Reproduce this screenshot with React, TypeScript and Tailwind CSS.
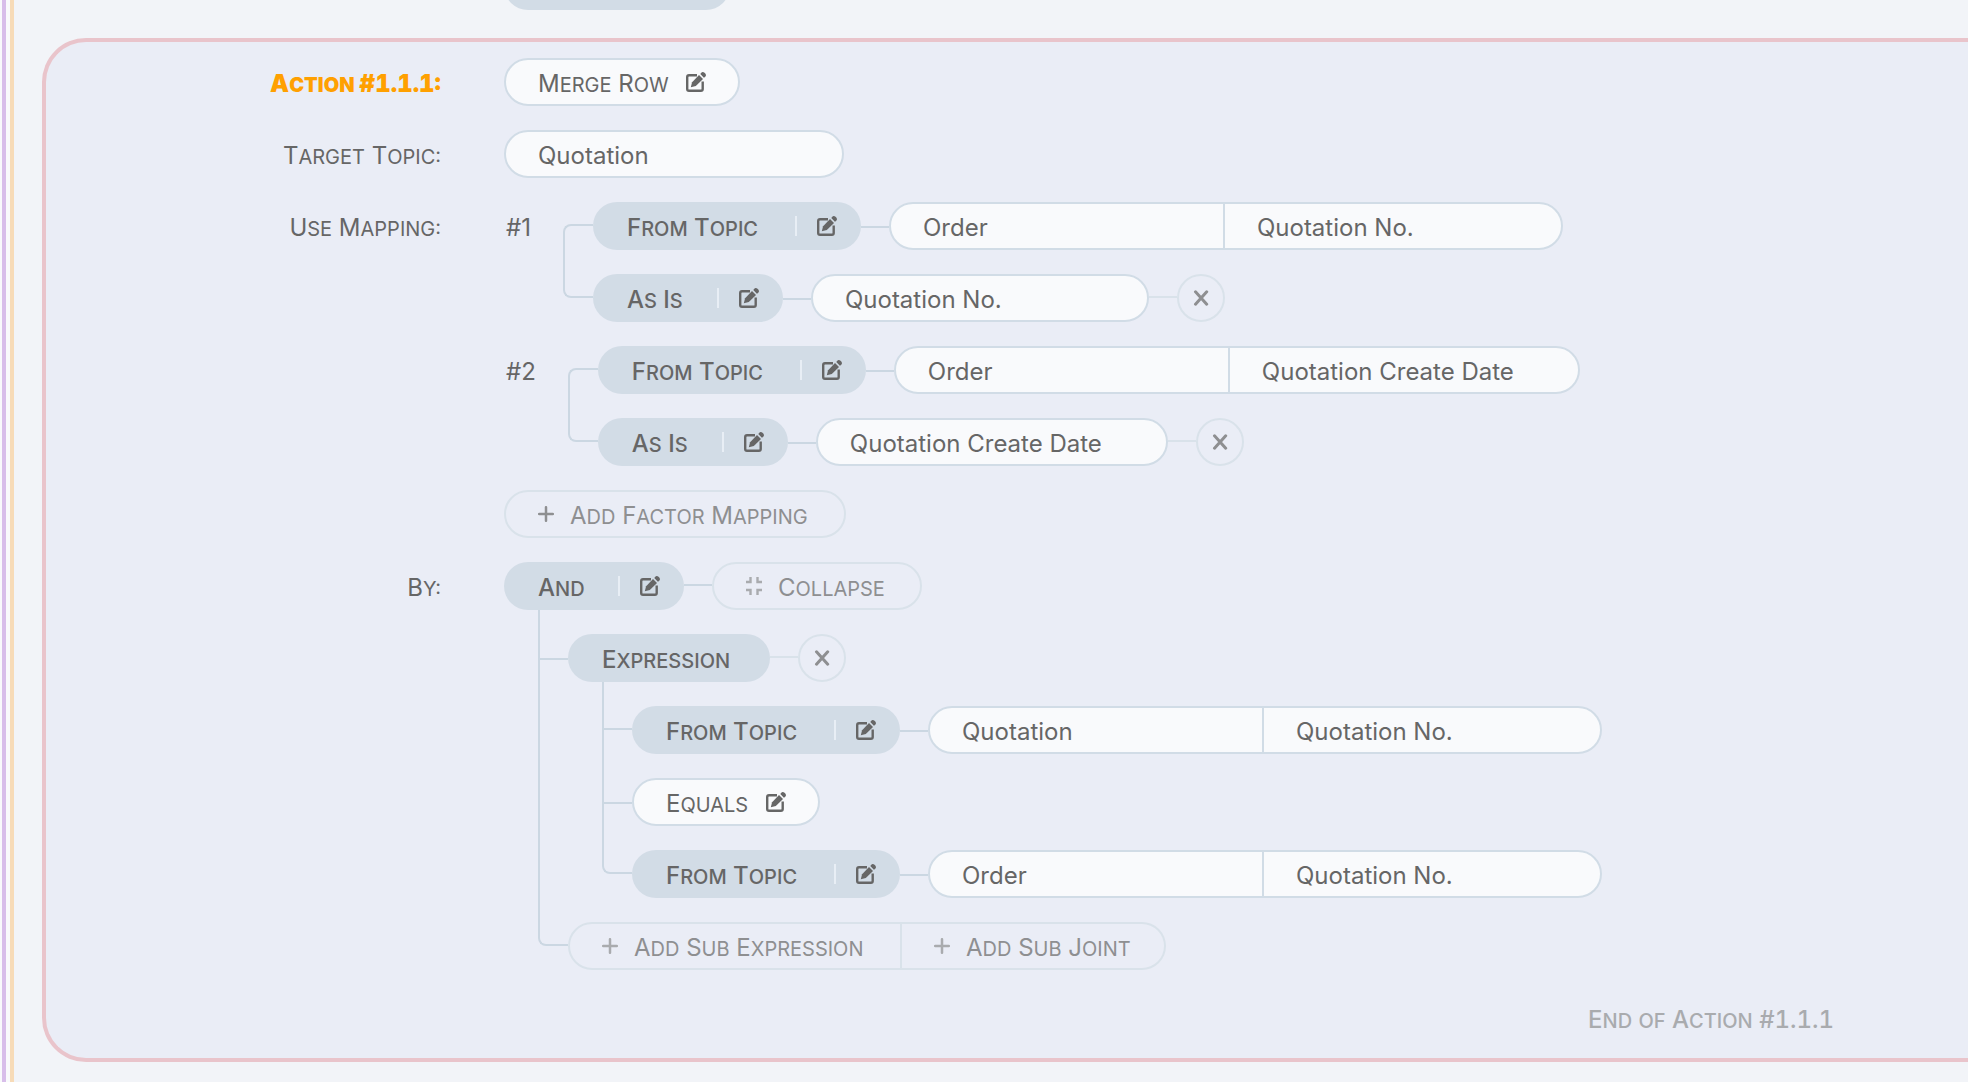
import React from "react";

/* Small-caps label: initials at full size, the rest as reduced capitals. */
function SmallCaps({ text }: { text: string }) {
  const words = text.split(" ");
  return (
    <span className="inline-block whitespace-nowrap pt-1 leading-6">
      {words.map((word, i) => (
        <React.Fragment key={i}>
          {i > 0 && " "}
          {word.startsWith("#") ? (
            <span className="inline-block tabular-nums">{word}</span>
          ) : word === "of" ? (
            <span className="inline-block text-[20px] uppercase leading-6">{word}</span>
          ) : (
            <span className="inline-block text-[20px] uppercase leading-6 first-letter:text-2xl">{word}</span>
          )}
        </React.Fragment>
      ))}
    </span>
  );
}

function EditIcon() {
  return (
    <svg className="h-5 w-5 shrink-0" viewBox="0 0 20 20" fill="none" aria-hidden="true">
      <path
        d="M11 3.3H3A1.8 1.8 0 0 0 1.2 5.1v11.9a1.8 1.8 0 0 0 1.8 1.8h11.9a1.8 1.8 0 0 0 1.8-1.8V9.6"
        stroke="currentColor"
        strokeWidth="2.4"
      />
      <path d="M13 3 17 7 9.8 14 4.8 15.3 6.1 10.3z" fill="currentColor" />
      <path d="M14.9 1.3a2.6 2.6 0 0 1 3.6-.6l.8.8a2.6 2.6 0 0 1-.6 3.7l-.8.6-3.6-3.7z" fill="currentColor" />
    </svg>
  );
}

function PlusIcon({ className = "" }: { className?: string }) {
  return (
    <svg className={`h-4 w-4 shrink-0 ${className}`} viewBox="0 0 16 16" fill="none" aria-hidden="true">
      <path d="M8 1.2v13.6M1.2 8h13.6" stroke="currentColor" strokeWidth="2.5" strokeLinecap="round" />
    </svg>
  );
}

function CrossIcon() {
  return (
    <svg className="h-4 w-4" viewBox="0 0 16 16" fill="none" aria-hidden="true">
      <path d="M2.5 1.8 13.7 14.2M13.7 1.8 2.5 14.2" stroke="currentColor" strokeWidth="3" strokeLinecap="round" />
    </svg>
  );
}

function CollapseIcon() {
  return (
    <svg className="h-[18px] w-4 shrink-0 text-[#a9abae]" viewBox="0 0 16 18" fill="none" aria-hidden="true">
      <path d="M4.5 0v5H0M11.5 0v5H16M4.5 18v-5H0M11.5 18v-5H16" stroke="currentColor" strokeWidth="2.4" />
    </svg>
  );
}

function Connector({ className = "mt-6 bg-[#cbd7e2]" }: { className?: string }) {
  return <span className={`h-0.5 w-7 shrink-0 ${className}`} />;
}

function Pill({ text, className = "", editable = true }: { text: string; className?: string; editable?: boolean }) {
  return (
    <button
      className={`flex h-12 shrink-0 items-center rounded-full bg-[#d2dce6] pl-[34px] font-medium ${
        editable ? "pr-6" : "pr-[34px]"
      } ${className}`}
    >
      <SmallCaps text={text} />
      {editable && (
        <>
          <span className="ml-auto mr-5 h-5 w-0.5 bg-[#e8eef5]" />
          <EditIcon />
        </>
      )}
    </button>
  );
}

function Choice({ text, className = "" }: { text: string; className?: string }) {
  return (
    <button
      className={`flex h-12 shrink-0 items-center justify-between rounded-full border-2 border-[#d1dce6] bg-[#f9fafc] px-8 ${className}`}
    >
      <SmallCaps text={text} />
      <EditIcon />
    </button>
  );
}

const field = "h-full bg-transparent pl-8 pt-0.5 outline-none";
const fieldBox = "flex h-12 shrink-0 overflow-hidden rounded-full border-2 border-[#d1dce6] bg-[#f9fafc]";

function TopicFactor({ topic, factor, wide = false }: { topic: string; factor: string; wide?: boolean }) {
  return (
    <div className="flex">
      <Pill text="From Topic" className="min-w-[268px]" />
      <Connector />
      <div className={fieldBox}>
        <input aria-label="Topic" className={`${field} w-[334px] border-r-2 border-[#d1dce6]`} defaultValue={topic} />
        <input aria-label="Factor" className={`${field} ${wide ? "w-[348px]" : "w-[336px]"}`} defaultValue={factor} />
      </div>
    </div>
  );
}

function RemoveButton() {
  return (
    <>
      <Connector className="mt-[22px] bg-[#d9e2ea]" />
      <button
        aria-label="Remove"
        className="flex h-12 w-12 shrink-0 items-center justify-center rounded-full border-2 border-[#d9e2ea] text-[#8e8f91]"
      >
        <CrossIcon />
      </button>
    </>
  );
}

function Mapping({ index, factor, wide = false }: { index: number; factor: string; wide?: boolean }) {
  return (
    <div className="flex">
      <span className="flex h-12 items-center pl-0.5 pt-1">#{index}</span>
      <span className="ml-8 mt-[22px] h-[74px] w-[30px] shrink-0 rounded-l-lg border-y-2 border-l-2 border-[#cbd7e2]" />
      <div className="flex flex-col gap-6">
        <TopicFactor topic="Order" factor={factor} wide={wide} />
        <div className="flex">
          <Pill text="As Is" className="min-w-[190px]" />
          <Connector />
          <div className={fieldBox}>
            <input
              aria-label="Target factor"
              className={`${field} ${wide ? "w-[348px]" : "w-[334px]"}`}
              defaultValue={factor}
            />
          </div>
          <RemoveButton />
        </div>
      </div>
    </div>
  );
}

function Branch({
  last = false,
  stub = "pt-12",
  children,
}: {
  last?: boolean;
  stub?: string;
  children: React.ReactNode;
}) {
  return (
    <div className="ml-[34px] flex">
      {last ? (
        <span className="h-12 w-[30px] shrink-0 rounded-bl-lg border-b-2 border-l-2 border-[#cbd7e2]" />
      ) : (
        <span className={`w-[30px] shrink-0 border-l-2 border-[#cbd7e2] ${stub}`}>
          <span className="block h-0.5 bg-[#cbd7e2]" />
        </span>
      )}
      <div className="pt-6">{children}</div>
    </div>
  );
}

const ghost = "flex h-12 shrink-0 items-center gap-4 border-2 border-[#d9e2ea] px-8 text-[#8e8f91]";

export default function App() {
  return (
    <div className="min-h-screen overflow-hidden bg-[#f9fafc] pl-0.5 text-2xl text-[#666] [font-family:Inter,sans-serif]">
      <div className="min-h-screen border-l-4 border-[#d8beea] pl-1">
        <div className="min-h-screen border-l-4 border-[#f7dbb8] bg-[#f2f4f8] pb-5">
          <div className="flow-root">
            <div className="-mt-[38px] ml-[490px] h-12 w-[226px] rounded-full bg-[#d2dce6]" />
          </div>

          <section className="ml-7 mt-7 rounded-l-[44px] border-4 border-r-0 border-[#e9c4cb] bg-[#eaedf6] py-4">
            <div className="grid grid-cols-[395px_1fr] gap-x-[63px] gap-y-6">
              <h2 className="flex h-12 items-center justify-end font-black text-[#ffa000]">
                <SmallCaps text="Action #1.1.1:" />
              </h2>
              <div className="flex">
                <Choice text="Merge Row" className="min-w-[236px]" />
              </div>

              <label htmlFor="target-topic" className="flex h-12 items-center justify-end">
                <SmallCaps text="Target Topic:" />
              </label>
              <div className="flex">
                <div className={fieldBox}>
                  <input id="target-topic" className={`${field} w-[336px]`} defaultValue="Quotation" />
                </div>
              </div>

              <div className="flex h-12 items-center justify-end">
                <SmallCaps text="Use Mapping:" />
              </div>
              <div className="flex flex-col items-start gap-6">
                <Mapping index={1} factor="Quotation No." />
                <Mapping index={2} factor="Quotation Create Date" wide />
                <button className={`${ghost} min-w-[342px] rounded-full`}>
                  <PlusIcon />
                  <SmallCaps text="Add Factor Mapping" />
                </button>
              </div>

              <div className="flex h-12 items-center justify-end">
                <SmallCaps text="By:" />
              </div>
              <div>
                <div className="flex">
                  <Pill text="And" className="min-w-[180px]" />
                  <Connector className="mt-[22px] bg-[#cbd7e2]" />
                  <button className={`${ghost} min-w-[210px] rounded-full`}>
                    <CollapseIcon />
                    <SmallCaps text="Collapse" />
                  </button>
                </div>
                <Branch>
                  <div className="flex">
                    <Pill text="Expression" className="min-w-[202px]" editable={false} />
                    <RemoveButton />
                  </div>
                  <Branch stub="pt-[46px]">
                    <TopicFactor topic="Quotation" factor="Quotation No." />
                  </Branch>
                  <Branch>
                    <Choice text="Equals" className="min-w-[188px]" />
                  </Branch>
                  <Branch last>
                    <TopicFactor topic="Order" factor="Quotation No." />
                  </Branch>
                </Branch>
                <Branch last>
                  <div className="flex">
                    <button className={`${ghost} min-w-[334px] rounded-l-full`}>
                      <PlusIcon className="text-[#a9abae]" />
                      <SmallCaps text="Add Sub Expression" />
                    </button>
                    <button className={`${ghost} min-w-[264px] rounded-r-full border-l-0`}>
                      <PlusIcon className="text-[#a9abae]" />
                      <SmallCaps text="Add Sub Joint" />
                    </button>
                  </div>
                </Branch>
              </div>
            </div>

            <div className="mt-6 flex h-12 items-center justify-end pr-[134px] font-medium text-[#a9abae]">
              <SmallCaps text="End of Action #1.1.1" />
            </div>
          </section>
        </div>
      </div>
    </div>
  );
}
